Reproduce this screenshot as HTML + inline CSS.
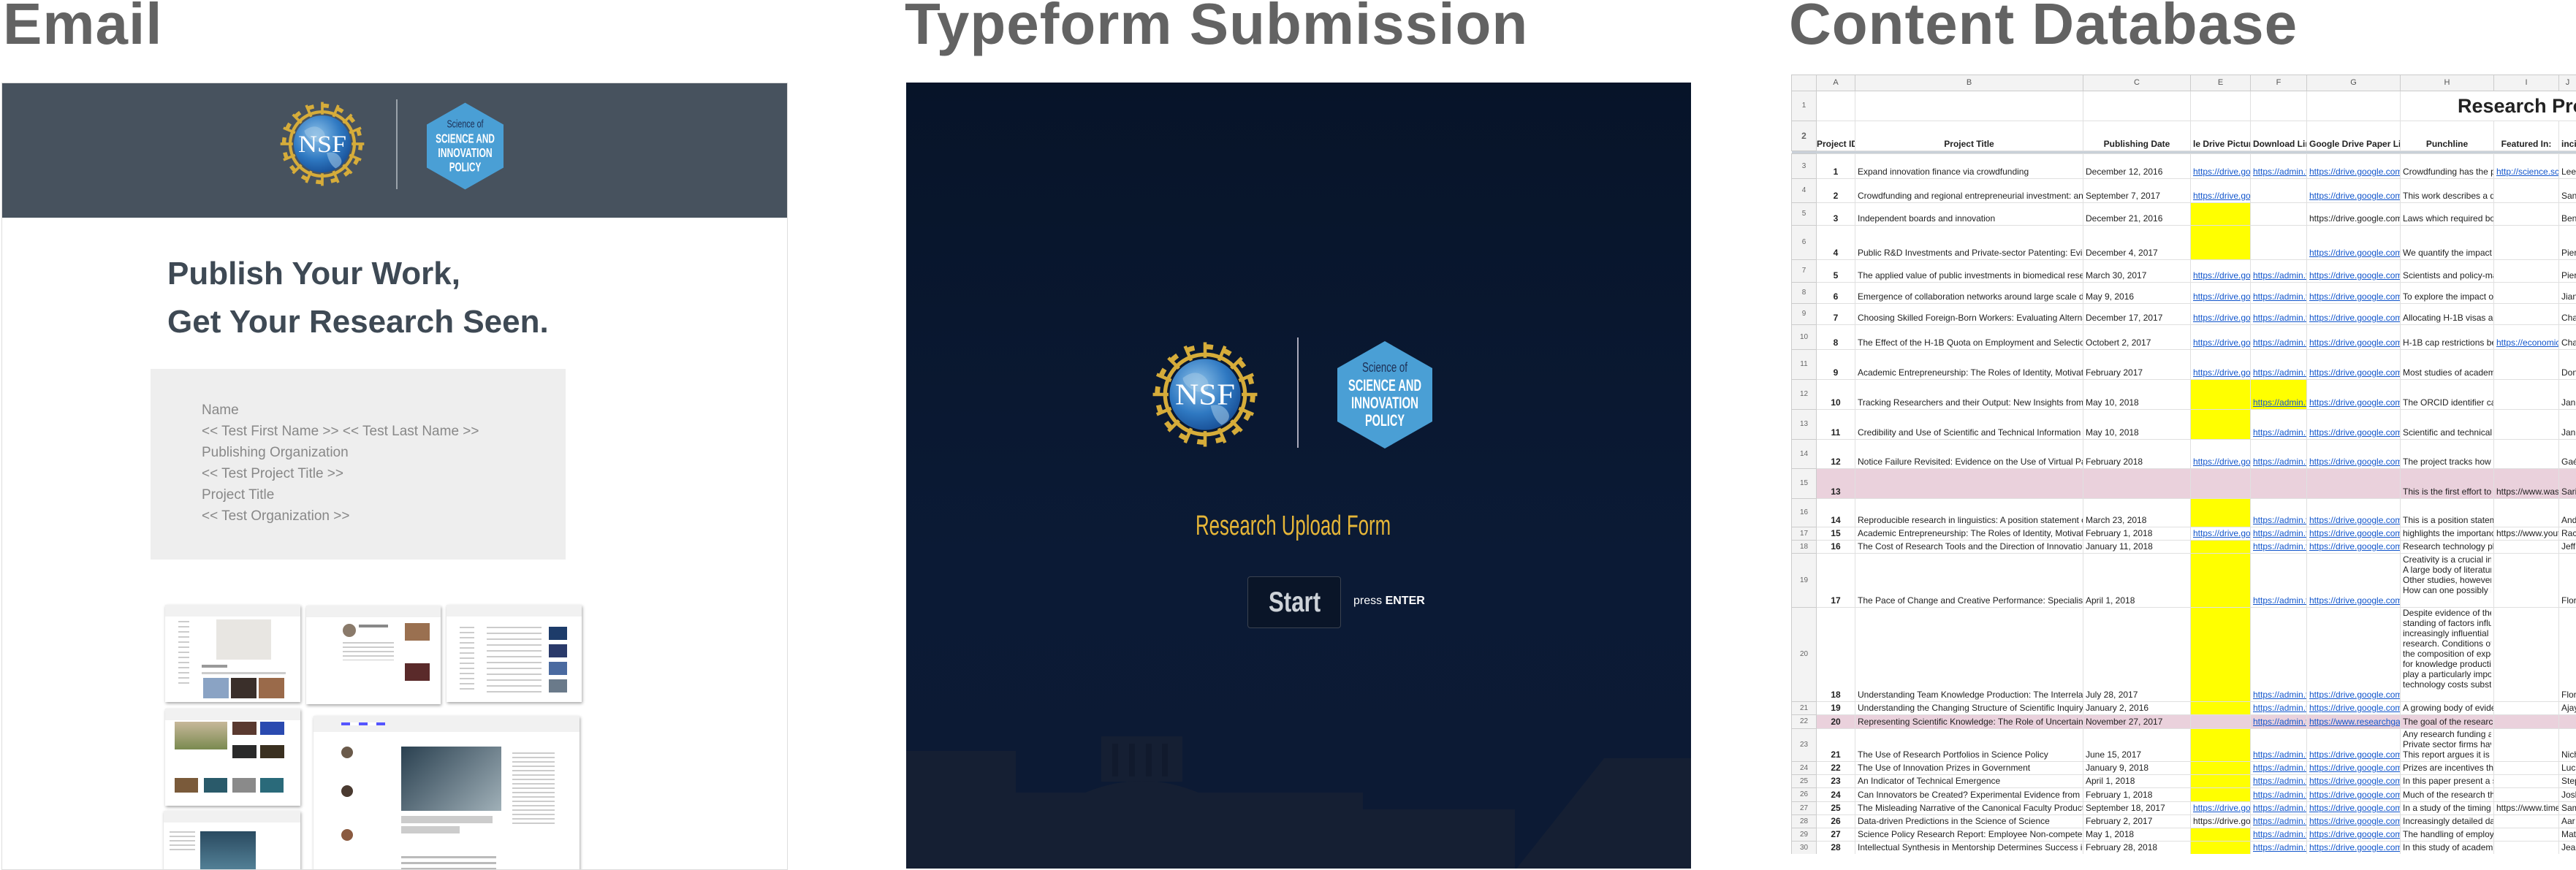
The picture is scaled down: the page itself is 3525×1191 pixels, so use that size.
<!DOCTYPE html>
<html><head><meta charset="utf-8"><style>
*{margin:0;padding:0;box-sizing:border-box}
body{width:3525px;height:1191px;background:#fff;position:relative;overflow:hidden;font-family:"Liberation Sans",sans-serif}
.ttl{position:absolute;top:-7px;font-size:80px;line-height:80px;color:#636363;letter-spacing:1px;font-weight:bold}
.abs{position:absolute}
#email{position:absolute;left:2px;top:113px;width:1076px;height:1078px;border:1px solid #ddd;background:#fff;overflow:hidden}
#ehead{position:absolute;left:0;top:0;width:100%;height:184px;background:#47525e}
.h1{position:absolute;left:226px;font-weight:bold;font-size:44px;line-height:44px;color:#3e4954;white-space:nowrap}
#gbox{position:absolute;left:203px;top:391px;width:568px;height:261px;background:#eee}
#gbox div{position:absolute;left:70px;font-size:19px;line-height:29px;color:#888;white-space:nowrap}
.th{position:absolute;background:#fff;box-shadow:1px 2px 4px rgba(0,0,0,.35);overflow:hidden}
.th .bar{height:12%;background:#f1f1f1}
.th i{position:absolute;display:block}
#tf{position:absolute;left:1240px;top:113px;width:1074px;height:1076px;background:linear-gradient(#071429,#0b1a35 60%,#0c1a34);overflow:hidden}
.sh{position:absolute;left:2451px;top:102px;width:1074px;height:1067px;overflow:hidden}
table{border-collapse:collapse;table-layout:fixed;width:1074px;font-size:12px;color:#222}
td{border:1px solid #e0e0e0;padding:0 3px 2px;white-space:nowrap;overflow:hidden;vertical-align:bottom;line-height:14px}
td:first-child{background:#f3f3f3;color:#666;font-size:10px;text-align:center;vertical-align:middle;padding:0;border-color:#ccc}
td:nth-child(2){font-weight:bold;text-align:center}
tr.hd td{background:#f3f3f3;color:#555;text-align:center;vertical-align:middle;font-weight:normal;font-size:11px;border-color:#ccc}
tr.c2 td{font-weight:bold;text-align:center;font-size:12px}
.y{background:#ff0}
.p td{background:#ead1dc}
.p td:first-child{background:#f3f3f3}
u{color:#1155cc}
.bar4 td{height:4px;background:#c9d0d8;padding:0;border:none}
.ml{vertical-align:bottom;padding-bottom:16px;white-space:normal;}
.ml span{display:block;white-space:nowrap;overflow:hidden}
</style></head><body>

<div class="ttl" style="left:4px">Email</div>
<div class="ttl" style="left:1238px">Typeform Submission</div>
<div class="ttl" style="left:2448px">Content Database</div>

<!-- EMAIL -->
<div id="email">
 <div id="ehead">
  <svg class="abs" style="left:377px;top:22px" width="122" height="122" viewBox="-100 -100 200 200">
   <defs><radialGradient id="gl" cx="40%" cy="35%" r="70%"><stop offset="0" stop-color="#8fc3ea"/><stop offset=".6" stop-color="#2f79c2"/><stop offset="1" stop-color="#174d94"/></radialGradient></defs>
   <g fill="none" stroke="#d6ac3a">
    <circle r="86" stroke-width="9" stroke-dasharray="14 19.8"/>
    <circle r="72" stroke-width="7"/>
   </g>
   <g stroke="#d6ac3a" stroke-width="6">
    <path d="M0-94V-66M0 94V66M-94 0H-66M94 0H66M66-66L47-47M-66-66L-47-47M66 66L47 47M-66 66L-47 47M36-87L25-61M-36-87L-25-61M36 87L25 61M-36 87L-25 61M87-36L61-25M-87-36L-61-25M87 36L61 25M-87 36L-61 25"/>
   </g>
   <circle r="64" fill="url(#gl)"/>
   <path d="M-40-30q20-15 35-5t10 25q-15 10-30 0t-15-20zM10 20q20-5 30 10t-10 25q-15-10-20-35z" fill="#9cc4e4" opacity=".6"/>
   <text x="0" y="18" text-anchor="middle" font-family="Liberation Serif,serif" font-size="54" fill="#fff" textLength="108" lengthAdjust="spacingAndGlyphs">NSF</text>
  </svg>
  <div class="abs" style="left:539px;top:22px;width:2px;height:123px;background:#9aa2aa"></div>
  <svg class="abs" style="left:581px;top:26px" width="105" height="120" viewBox="0 0 130 147">
   <polygon points="65,0 130,37 130,110 65,147 0,110 0,37" fill="#4a9fd5"/>
   <text x="65" y="42" text-anchor="middle" font-size="18" fill="#1d2f55" font-family="Liberation Sans Narrow,Liberation Sans,sans-serif" textLength="62" lengthAdjust="spacingAndGlyphs">Science of</text>
   <g font-weight="bold" fill="#fff" text-anchor="middle" font-size="22" font-family="Liberation Sans Narrow,Liberation Sans,sans-serif">
    <text x="65" y="68" textLength="100" lengthAdjust="spacingAndGlyphs">SCIENCE AND</text>
    <text x="65" y="92" textLength="92" lengthAdjust="spacingAndGlyphs">INNOVATION</text>
    <text x="65" y="116" textLength="54" lengthAdjust="spacingAndGlyphs">POLICY</text>
   </g>
  </svg>
 </div>
 <div class="h1" style="top:239px">Publish Your Work,</div>
 <div class="h1" style="top:305px">Get Your Research Seen.</div>
 <div id="gbox">
  <div style="top:42px">Name</div>
  <div style="top:71px">&lt;&lt; Test First Name &gt;&gt; &lt;&lt; Test Last Name &gt;&gt;</div>
  <div style="top:100px">Publishing Organization</div>
  <div style="top:129px">&lt;&lt; Test Project Title &gt;&gt;</div>
  <div style="top:158px">Project Title</div>
  <div style="top:187px">&lt;&lt; Test Organization &gt;&gt;</div>
 </div>
 <!-- thumbnails -->
 <div class="th" style="left:223px;top:714px;width:185px;height:133px"><div class="bar"></div>
  <i style="left:70px;top:20px;width:75px;height:55px;background:#e8e6e2"></i>
  <i style="left:50px;top:82px;width:35px;height:4px;background:#999"></i>
  <i style="left:50px;top:92px;width:115px;height:3px;background:#ccc"></i>
  <i style="left:52px;top:100px;width:35px;height:28px;background:#8aa3c4"></i>
  <i style="left:90px;top:100px;width:35px;height:28px;background:#3a2f2a"></i>
  <i style="left:128px;top:100px;width:35px;height:28px;background:#9a6a4a"></i>
  <i style="left:18px;top:22px;width:15px;height:90px;background:repeating-linear-gradient(#ccc 0 2px,#fff 2px 7px)"></i>
 </div>
 <div class="th" style="left:416px;top:715px;width:184px;height:135px"><div class="bar"></div>
  <i style="left:50px;top:25px;width:18px;height:18px;border-radius:50%;background:#8a7a6a"></i>
  <i style="left:72px;top:26px;width:40px;height:4px;background:#888"></i>
  <i style="left:50px;top:50px;width:70px;height:25px;background:repeating-linear-gradient(#ccc 0 2px,#fff 2px 6px)"></i>
  <i style="left:135px;top:24px;width:34px;height:24px;background:#9a7050"></i>
  <i style="left:135px;top:79px;width:34px;height:24px;background:#5a2a2a"></i>
 </div>
 <div class="th" style="left:608px;top:714px;width:185px;height:133px"><div class="bar"></div>
  <i style="left:140px;top:30px;width:25px;height:18px;background:#1d3c6a"></i>
  <i style="left:140px;top:54px;width:25px;height:18px;background:#2a3a6a"></i>
  <i style="left:140px;top:78px;width:25px;height:18px;background:#4a6aa0"></i>
  <i style="left:140px;top:102px;width:25px;height:18px;background:#6a7a8a"></i>
  <i style="left:55px;top:30px;width:75px;height:90px;background:repeating-linear-gradient(#ccc 0 2px,#fff 2px 8px)"></i>
  <i style="left:18px;top:30px;width:20px;height:90px;background:repeating-linear-gradient(#ccc 0 2px,#fff 2px 7px)"></i>
 </div>
 <div class="th" style="left:223px;top:856px;width:185px;height:133px"><div class="bar"></div>
  <i style="left:13px;top:18px;width:72px;height:38px;background:linear-gradient(#c7b89a,#7a8a50)"></i>
  <i style="left:92px;top:18px;width:33px;height:18px;background:#5a3a30"></i>
  <i style="left:130px;top:18px;width:33px;height:18px;background:#2a4ab0"></i>
  <i style="left:92px;top:50px;width:33px;height:18px;background:#2a2a2a"></i>
  <i style="left:130px;top:50px;width:33px;height:18px;background:#3a3020"></i>
  <i style="left:13px;top:95px;width:32px;height:20px;background:#7a5a3a"></i>
  <i style="left:53px;top:95px;width:32px;height:20px;background:#2a5a6a"></i>
  <i style="left:92px;top:95px;width:32px;height:20px;background:#8a8a8a"></i>
  <i style="left:130px;top:95px;width:32px;height:20px;background:#2a6a7a"></i>
 </div>
 <div class="th" style="left:426px;top:866px;width:364px;height:220px"><div class="bar" style="height:22px"></div>
  <i style="left:38px;top:9px;width:60px;height:4px;background:repeating-linear-gradient(90deg,#55f 0 12px,#fff 12px 24px)"></i>
  <i style="left:120px;top:42px;width:137px;height:88px;background:linear-gradient(135deg,#2a4050,#a0b0b8)"></i>
  <i style="left:120px;top:137px;width:125px;height:10px;background:#aaa;opacity:.6"></i>
  <i style="left:120px;top:151px;width:80px;height:10px;background:#aaa;opacity:.6"></i>
  <i style="left:120px;top:192px;width:130px;height:28px;background:repeating-linear-gradient(#bbb 0 3px,#fff 3px 8px)"></i>
  <i style="left:38px;top:42px;width:16px;height:16px;border-radius:50%;background:#6a5a4a"></i>
  <i style="left:38px;top:95px;width:16px;height:16px;border-radius:50%;background:#4a3a30"></i>
  <i style="left:38px;top:155px;width:16px;height:16px;border-radius:50%;background:#8a5a40"></i>
  <i style="left:272px;top:50px;width:58px;height:100px;background:repeating-linear-gradient(#ccc 0 2px,#fff 2px 6px)"></i>
 </div>
 <div class="th" style="left:221px;top:996px;width:187px;height:90px"><div class="bar" style="height:16px"></div>
  <i style="left:50px;top:28px;width:76px;height:62px;background:linear-gradient(#2a4a60,#5a8aa0)"></i>
  <i style="left:8px;top:28px;width:35px;height:30px;background:repeating-linear-gradient(#ccc 0 2px,#fff 2px 6px)"></i>
 </div>
</div>

<!-- TYPEFORM -->
<div id="tf">
 <svg class="abs" style="left:0;top:890px" width="1074" height="190" viewBox="0 0 1074 190">
  <g fill="#151f33">
   <rect x="0" y="25" width="150" height="170"/>
   <rect x="150" y="82" width="475" height="110"/>
   <rect x="267" y="5" width="111" height="62"/>
   <path d="M245 82Q322 50 400 82Z"/>
   <rect x="625" y="105" width="208" height="90"/>
   <path d="M832 190L955 35H1074V190Z"/>
  </g>
  <g fill="#111a2d"><rect x="282" y="15" width="8" height="45"/><rect x="305" y="15" width="8" height="45"/><rect x="328" y="15" width="8" height="45"/><rect x="350" y="15" width="8" height="45"/></g>
 </svg>
 <svg class="abs" style="left:333px;top:351px" width="152" height="152" viewBox="-100 -100 200 200">
   <defs><radialGradient id="gl2" cx="40%" cy="35%" r="70%"><stop offset="0" stop-color="#8fc3ea"/><stop offset=".6" stop-color="#2f79c2"/><stop offset="1" stop-color="#174d94"/></radialGradient></defs>
   <g fill="none" stroke="#d6ac3a">
    <circle r="86" stroke-width="9" stroke-dasharray="14 19.8"/>
    <circle r="72" stroke-width="7"/>
   </g>
   <g stroke="#d6ac3a" stroke-width="6">
    <path d="M0-94V-66M0 94V66M-94 0H-66M94 0H66M66-66L47-47M-66-66L-47-47M66 66L47 47M-66 66L-47 47M36-87L25-61M-36-87L-25-61M36 87L25 61M-36 87L-25 61M87-36L61-25M-87-36L-61-25M87 36L61 25M-87 36L-61 25"/>
   </g>
   <circle r="64" fill="url(#gl2)"/>
   <path d="M-40-30q20-15 35-5t10 25q-15 10-30 0t-15-20zM10 20q20-5 30 10t-10 25q-15-10-20-35z" fill="#9cc4e4" opacity=".6"/>
   <text x="0" y="18" text-anchor="middle" font-family="Liberation Serif,serif" font-size="54" fill="#fff" textLength="108" lengthAdjust="spacingAndGlyphs">NSF</text>
 </svg>
 <div class="abs" style="left:535px;top:349px;width:2px;height:151px;background:#aab"></div>
 <svg class="abs" style="left:590px;top:354px" width="130" height="147" viewBox="0 0 130 147">
   <polygon points="65,0 130,37 130,110 65,147 0,110 0,37" fill="#4a9fd5"/>
   <text x="65" y="42" text-anchor="middle" font-size="18" fill="#1d2f55" font-family="Liberation Sans Narrow,Liberation Sans,sans-serif" textLength="62" lengthAdjust="spacingAndGlyphs">Science of</text>
   <g font-weight="bold" fill="#fff" text-anchor="middle" font-size="22" font-family="Liberation Sans Narrow,Liberation Sans,sans-serif">
    <text x="65" y="68" textLength="100" lengthAdjust="spacingAndGlyphs">SCIENCE AND</text>
    <text x="65" y="92" textLength="92" lengthAdjust="spacingAndGlyphs">INNOVATION</text>
    <text x="65" y="116" textLength="54" lengthAdjust="spacingAndGlyphs">POLICY</text>
   </g>
 </svg>
 <div class="abs" style="left:396px;top:588px;font-size:38px;line-height:38px;color:#e6b638;white-space:nowrap;transform:scaleX(.68);transform-origin:0 0">Research Upload Form</div>
 <div class="abs" style="left:467px;top:676px;width:128px;height:71px;border:1px solid #3a4250;border-radius:4px;background:#0a1528"></div>
 <div class="abs" style="left:496px;top:692px;font-size:39px;line-height:39px;font-weight:bold;color:#cdd2d8;transform:scaleX(.8);transform-origin:0 0">Start</div>
 <div class="abs" style="left:612px;top:702px;font-size:16px;line-height:16px;color:#fff;white-space:nowrap">press <b>ENTER</b></div>
</div>

<!-- SHEET -->
<div class="sh">
<table>
<colgroup><col style="width:34px"><col style="width:53px"><col style="width:312px"><col style="width:147px"><col style="width:82px"><col style="width:77px"><col style="width:128px"><col style="width:128px"><col style="width:89px"><col style="width:24px"></colgroup>
<tr class="hd" style="height:22px"><td></td><td>A</td><td>B</td><td>C</td><td>E</td><td>F</td><td>G</td><td>H</td><td>I</td><td>J</td></tr>
<tr style="height:41px"><td>1</td><td></td><td></td><td></td><td></td><td></td><td></td><td colspan="3" style="font-size:27px;font-weight:bold;line-height:30px;padding-bottom:5px;overflow:visible;text-align:left;padding-left:78px">Research Proj</td></tr>
<tr class="c2" style="height:41px"><td>2</td><td style="padding:0 0 2px">Project ID</td><td>Project Title</td><td>Publishing Date</td><td>le Drive Pictur</td><td>Download Lin</td><td>Google Drive Paper Link</td><td>Punchline</td><td>Featured In:</td><td style="text-align:left">incip</td></tr>
<tr class="bar4"><td colspan="10"></td></tr>
<tr style="height:34px"><td>3</td><td>1</td><td>Expand innovation finance via crowdfunding</td><td>December 12, 2016</td><td><u>https://drive.goo</u></td><td><u>https://admin.t</u></td><td><u>https://drive.google.com/</u></td><td>Crowdfunding has the po</td><td><u>http://science.sci</u></td><td>Lee</td></tr>
<tr style="height:33px"><td>4</td><td>2</td><td>Crowdfunding and regional entrepreneurial investment: an ap</td><td>September 7, 2017</td><td><u>https://drive.goo</u></td><td></td><td><u>https://drive.google.com/</u></td><td>This work describes a da</td><td></td><td>San</td></tr>
<tr style="height:31px"><td>5</td><td>3</td><td>Independent boards and innovation</td><td>December 21, 2016</td><td class="y"></td><td></td><td>https://drive.google.com/</td><td>Laws which required boa</td><td></td><td>Ben</td></tr>
<tr style="height:47px"><td>6</td><td>4</td><td>Public R&amp;D Investments and Private-sector Patenting: Evide</td><td>December 4, 2017</td><td class="y"></td><td></td><td><u>https://drive.google.com/</u></td><td>We quantify the impact o</td><td></td><td>Pier</td></tr>
<tr style="height:31px"><td>7</td><td>5</td><td>The applied value of public investments in biomedical resear</td><td>March 30, 2017</td><td><u>https://drive.goo</u></td><td><u>https://admin.t</u></td><td><u>https://drive.google.com/</u></td><td>Scientists and policy-ma</td><td></td><td>Pier</td></tr>
<tr style="height:29px"><td>8</td><td>6</td><td>Emergence of collaboration networks around large scale dat</td><td>May 9, 2016</td><td><u>https://drive.goo</u></td><td><u>https://admin.t</u></td><td><u>https://drive.google.com/</u></td><td>To explore the impact of</td><td></td><td>Jian</td></tr>
<tr style="height:29px"><td>9</td><td>7</td><td>Choosing Skilled Foreign-Born Workers: Evaluating Alternati</td><td>December 17, 2017</td><td><u>https://drive.goo</u></td><td><u>https://admin.t</u></td><td><u>https://drive.google.com/</u></td><td>Allocating H-1B visas ac</td><td></td><td>Cha</td></tr>
<tr style="height:34px"><td>10</td><td>8</td><td>The Effect of the H-1B Quota on Employment and Selection</td><td>Octobert 2, 2017</td><td><u>https://drive.goo</u></td><td><u>https://admin.t</u></td><td><u>https://drive.google.com/</u></td><td>H-1B cap restrictions be</td><td><u>https://economics</u></td><td>Cha</td></tr>
<tr style="height:41px"><td>11</td><td>9</td><td>Academic Entrepreneurship: The Roles of Identity, Motivation</td><td>February 2017</td><td><u>https://drive.goo</u></td><td><u>https://admin.t</u></td><td><u>https://drive.google.com/</u></td><td>Most studies of academi</td><td></td><td>Don</td></tr>
<tr style="height:41px"><td>12</td><td>10</td><td>Tracking Researchers and their Output: New Insights from O</td><td>May 10, 2018</td><td class="y"></td><td class="y"><u>https://admin.t</u></td><td><u>https://drive.google.com/</u></td><td>The ORCID identifier ca</td><td></td><td>Jan</td></tr>
<tr style="height:41px"><td>13</td><td>11</td><td>Credibility and Use of Scientific and Technical Information in</td><td>May 10, 2018</td><td class="y"></td><td><u>https://admin.t</u></td><td><u>https://drive.google.com/</u></td><td>Scientific and technical i</td><td></td><td>Jan</td></tr>
<tr style="height:40px"><td>14</td><td>12</td><td>Notice Failure Revisited: Evidence on the Use of Virtual Pate</td><td>February 2018</td><td><u>https://drive.goo</u></td><td><u>https://admin.t</u></td><td><u>https://drive.google.com/</u></td><td>The project tracks how s</td><td></td><td>Gaé</td></tr>
<tr class="p" style="height:41px"><td>15</td><td>13</td><td></td><td></td><td></td><td></td><td></td><td>This is the first effort to u</td><td>https://www.wash</td><td>Sari</td></tr>
<tr style="height:39px"><td>16</td><td>14</td><td>Reproducible research in linguistics: A position statement on</td><td>March 23, 2018</td><td class="y"></td><td><u>https://admin.t</u></td><td><u>https://drive.google.com/</u></td><td>This is a position statem</td><td></td><td>And</td></tr>
<tr style="height:18px"><td>17</td><td>15</td><td>Academic Entrepreneurship: The Roles of Identity, Motivation</td><td>February 1, 2018</td><td><u>https://drive.goo</u></td><td><u>https://admin.t</u></td><td><u>https://drive.google.com/</u></td><td>highlights the importance</td><td>https://www.youtu</td><td>Rac</td></tr>
<tr style="height:18px"><td>18</td><td>16</td><td>The Cost of Research Tools and the Direction of Innovation:</td><td>January 11, 2018</td><td class="y"></td><td><u>https://admin.t</u></td><td><u>https://drive.google.com/</u></td><td>Research technology pla</td><td></td><td>Jeff</td></tr>
<tr style="height:74px"><td>19</td><td>17</td><td>The Pace of Change and Creative Performance: Specialist a</td><td>April 1, 2018</td><td class="y"></td><td><u>https://admin.t</u></td><td><u>https://drive.google.com/</u></td><td class="ml"><span>Creativity is a crucial ing</span><span>A large body of literature</span><span>Other studies, however,</span><span>How can one possibly re</span></td><td></td><td>Flor</td></tr>
<tr style="height:129px"><td>20</td><td>18</td><td>Understanding Team Knowledge Production: The Interrelate</td><td>July 28, 2017</td><td class="y"></td><td><u>https://admin.t</u></td><td><u>https://drive.google.com/</u></td><td class="ml"><span>Despite evidence of the</span><span>standing of factors influe</span><span>increasingly influential ro</span><span>research. Conditions of a</span><span>the composition of exper</span><span>for knowledge productio</span><span>play a particularly import</span><span>technology costs substit</span></td><td></td><td>Flor</td></tr>
<tr style="height:18px"><td>21</td><td>19</td><td>Understanding the Changing Structure of Scientific Inquiry</td><td>January 2, 2016</td><td class="y"></td><td><u>https://admin.t</u></td><td><u>https://drive.google.com/</u></td><td>A growing body of evide</td><td></td><td>Ajay</td></tr>
<tr class="p" style="height:19px"><td>22</td><td>20</td><td>Representing Scientific Knowledge: The Role of Uncertainty</td><td>November 27, 2017</td><td></td><td><u>https://admin.t</u></td><td><u>https://www.researchgat</u></td><td>The goal of the research</td><td></td><td></td></tr>
<tr style="height:45px"><td>23</td><td>21</td><td>The Use of Research Portfolios in Science Policy</td><td>June 15, 2017</td><td class="y"></td><td><u>https://admin.t</u></td><td><u>https://drive.google.com/</u></td><td class="ml" style="padding-bottom:2px"><span>Any research funding an</span><span>Private sector firms have</span><span>This report argues it is h</span></td><td></td><td>Nich</td></tr>
<tr style="height:18px"><td>24</td><td>22</td><td>The Use of Innovation Prizes in Government</td><td>January 9, 2018</td><td class="y"></td><td><u>https://admin.t</u></td><td><u>https://drive.google.com/</u></td><td>Prizes are incentives tha</td><td></td><td>Luci</td></tr>
<tr style="height:18px"><td>25</td><td>23</td><td>An Indicator of Technical Emergence</td><td>April 1, 2018</td><td class="y"></td><td><u>https://admin.t</u></td><td><u>https://drive.google.com/</u></td><td>In this paper present a s</td><td></td><td>Step</td></tr>
<tr style="height:19px"><td>26</td><td>24</td><td>Can Innovators be Created? Experimental Evidence from an</td><td>February 1, 2018</td><td class="y"></td><td><u>https://admin.t</u></td><td><u>https://drive.google.com/</u></td><td>Much of the research tha</td><td></td><td>Josh</td></tr>
<tr style="height:18px"><td>27</td><td>25</td><td>The Misleading Narrative of the Canonical Faculty Productivi</td><td>September 18, 2017</td><td><u>https://drive.goo</u></td><td><u>https://admin.t</u></td><td><u>https://drive.google.com/</u></td><td>In a study of the timing c</td><td>https://www.times</td><td>Sam</td></tr>
<tr style="height:18px"><td>28</td><td>26</td><td>Data-driven Predictions in the Science of Science</td><td>February 2, 2017</td><td>https://drive.goo</td><td><u>https://admin.t</u></td><td><u>https://drive.google.com/</u></td><td>Increasingly detailed dat</td><td></td><td>Aar</td></tr>
<tr style="height:18px"><td>29</td><td>27</td><td>Science Policy Research Report: Employee Non-compete Ag</td><td>May 1, 2018</td><td class="y"></td><td><u>https://admin.t</u></td><td><u>https://drive.google.com/</u></td><td>The handling of employe</td><td></td><td>Mat</td></tr>
<tr style="height:18px"><td>30</td><td>28</td><td>Intellectual Synthesis in Mentorship Determines Success in A</td><td>February 28, 2018</td><td class="y"></td><td><u>https://admin.t</u></td><td><u>https://drive.google.com/</u></td><td>In this study of academic</td><td></td><td>Jea</td></tr>
</table>
</div>
</body></html>
